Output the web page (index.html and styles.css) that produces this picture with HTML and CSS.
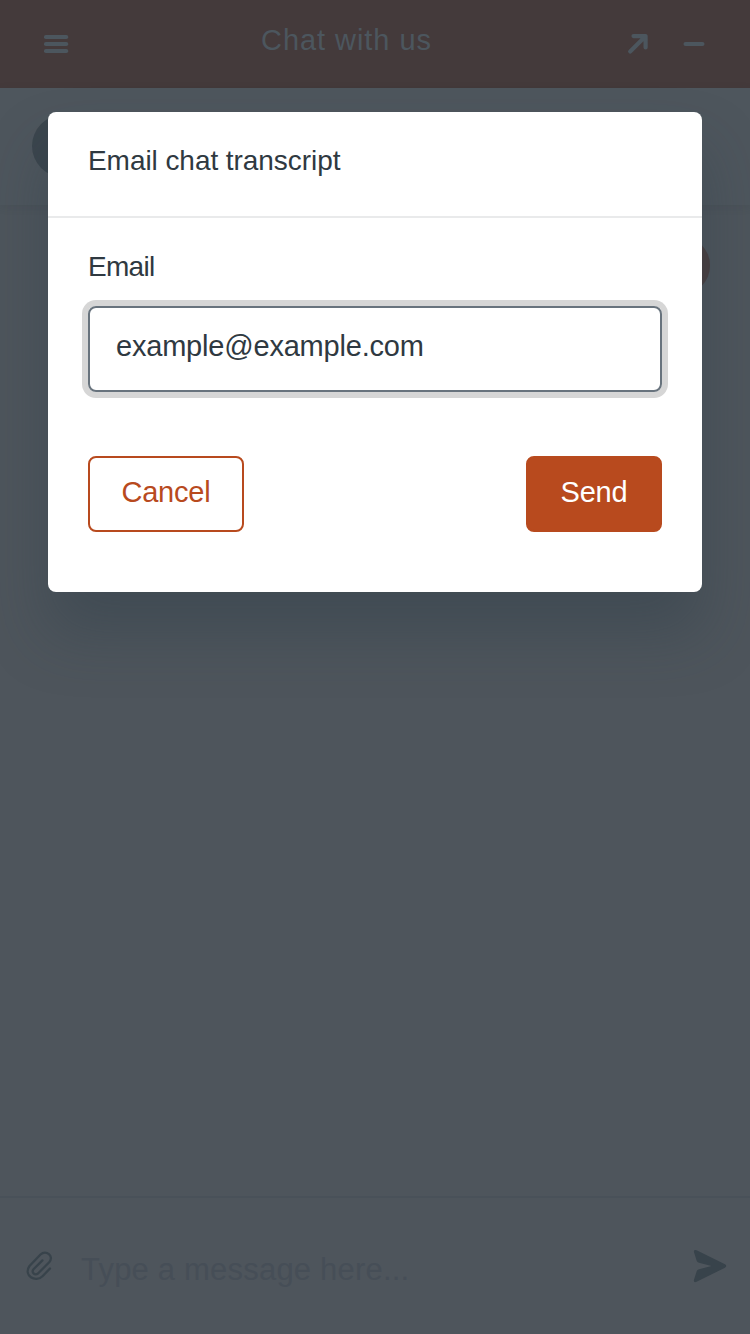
FILE: index.html
```html
<!DOCTYPE html>
<html lang="en">
<head>
<meta charset="utf-8">
<title>Chat with us</title>
<link rel="stylesheet" href="styles.css">
</head>
<body>
<div class="chat">
  <header class="topbar">
    <svg class="menu-icon" width="26" height="20" viewBox="0 0 26 20" fill="currentColor"><rect x="1" y="1" width="24.2" height="4" rx="1.8"/><rect x="1" y="8" width="24.2" height="4" rx="1.8"/><rect x="1" y="15" width="24.2" height="4" rx="1.8"/></svg>
    <h1 class="topbar-title">Chat with us</h1>
    <div class="topbar-actions">
      <svg width="22" height="22" viewBox="0 0 22 22" fill="none" stroke="currentColor" stroke-width="4.200" stroke-linecap="round" stroke-linejoin="round"><path d="M3.200 18.600 17.500 4.300M6.500 3.100H18.600V14.500"/></svg>
      <svg width="22" height="22" viewBox="0 0 22 22" fill="currentColor"><rect x=".5" y="9" width="21" height="4" rx="2"/></svg>
    </div>
  </header>
  <div class="agent-bar"><span class="avatar"></span></div>
  <main class="messages"><span class="bubble"></span></main>
  <footer class="composer">
    <svg class="clip" width="28" height="32" viewBox="0 0 28 32" fill="none" stroke="currentColor" stroke-width="2.3" stroke-linecap="round" stroke-linejoin="round"><path d="M25 18.500 17.500 26.200C10.500 33.200-2 25.500 4.500 16L15.500 4.500C21-.500 29.500 6 24.200 12.300L13 23.500C9.500 26 6.200 22 8.500 19.200L17.400 10.400"/></svg>
    <span class="placeholder">Type a message here...</span>
    <svg class="send-icon" width="34" height="34" viewBox="0 0 34 34" fill="currentColor"><path d="M3.600 1.300 32 15.300Q34.500 17 32 18.700L3.600 32.800Q.2 34 1 30.800L3.600 22.500Q4.200 20.600 6 20.200L18.500 17 6 13.800Q4.200 13.400 3.600 11.500L1 3.300Q.4.300 3.600 1.300Z"/></svg>
  </footer>
</div>
<div class="overlay">
  <section class="dialog">
    <h2 class="dialog-title">Email chat transcript</h2>
    <div class="dialog-body">
      <label class="label">Email</label>
      <div class="field">example@example.com</div>
      <div class="buttons">
        <button class="btn btn-outline">Cancel</button>
        <button class="btn btn-solid">Send</button>
      </div>
    </div>
  </section>
</div>
</body>
</html>
```
FILE: styles.css
```css
* { box-sizing: border-box; }
body { margin: 0; font-family: "Liberation Sans", Arial, sans-serif; color: #2f3941; }
svg { display: block; flex: none; }

.chat { width: 750px; height: 1334px; display: flex; flex-direction: column; background: #4e555c; overflow: hidden; }
.topbar { height: 88px; flex: none; display: flex; align-items: center; padding: 0 45px 0 43px; background: #443a3b; color: #4c565e; }
.topbar-title { flex: 1; margin: 0 0 9px 192px; font-size: 29px; line-height: 34px; font-weight: 400; letter-spacing: .95px; }
.topbar-actions { display: flex; gap: 34px; }
.agent-bar { height: 117px; flex: none; padding: 27px 32px; background: #4e565d; box-shadow: 0 2px 8px rgba(47, 57, 65, .14); }
.avatar { display: block; width: 62px; height: 62px; border-radius: 50%; background: #3b454d; }
.messages { flex: 1; display: flex; justify-content: flex-end; align-items: flex-start; padding: 32px 40px; }
.bubble { width: 140px; height: 57px; border-radius: 28px; background: #493f40; }
.composer { height: 138px; flex: none; display: flex; align-items: center; padding: 0 23px 0 25px; border-top: 2px solid #495159; }
.clip { color: #38434b; }
.placeholder { flex: 1; margin: 8px 0 0 28px; font-size: 31px; line-height: 36px; letter-spacing: .2px; color: #464e57; }
.send-icon { color: #38434b; }

.overlay { position: absolute; top: 0; left: 0; width: 750px; height: 1334px; padding: 112px 48px; overflow: hidden; }
.dialog { height: 480px; border-radius: 8px; background: #fff; box-shadow: 0 40px 60px rgba(40, 57, 68, .35); }
.dialog-title { height: 106px; margin: 0; padding: 33px 40px 0; border-bottom: 2px solid #e9eaeb; font-size: 28px; line-height: 32px; font-weight: 400; letter-spacing: -.06px; }
.dialog-body { padding: 33px 40px 0; }
.label { display: block; font-size: 28px; line-height: 32px; letter-spacing: -.7px; }
.field { height: 86px; margin-top: 23px; padding: 21px 26px; border: 2px solid #68737d; border-radius: 8px; box-shadow: 0 0 0 6px #d6d6d6; font-size: 29px; line-height: 34px; letter-spacing: -.2px; }
.buttons { display: flex; justify-content: space-between; margin-top: 64px; }
.btn { height: 76px; padding: 0 0 5px; border: 2px solid #b84a1e; border-radius: 8px; font: 29px/34px "Liberation Sans", Arial, sans-serif; letter-spacing: -.2px; }
.btn-outline { width: 156px; background: #fff; color: #b84a1e; }
.btn-solid { width: 136px; background: #b84a1e; color: #fff; }
```
